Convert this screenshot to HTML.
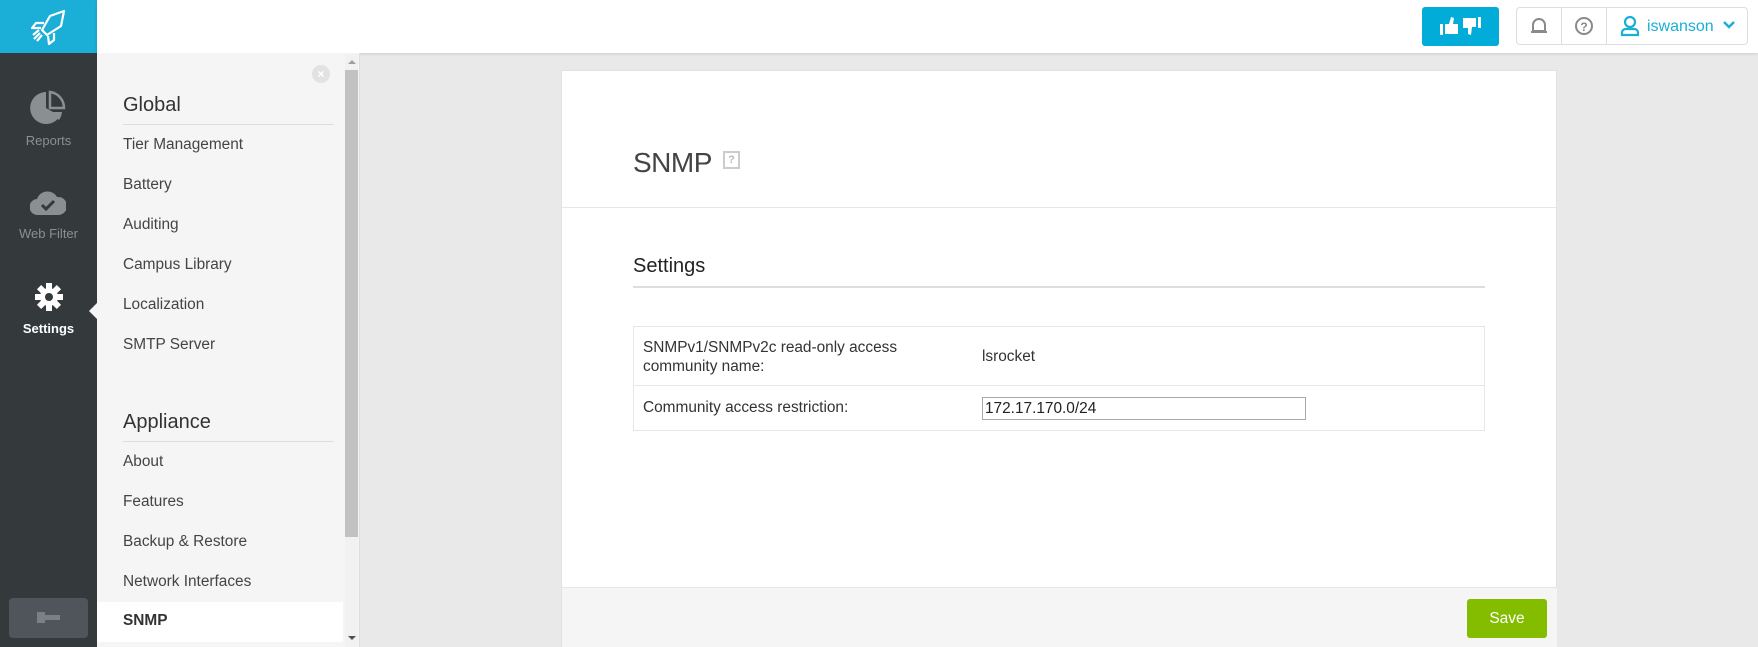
<!DOCTYPE html>
<html><head><meta charset="utf-8"><style>
*{box-sizing:border-box;margin:0;padding:0}
body{width:1758px;height:647px;overflow:hidden;background:#e9e9e9;font-family:"Liberation Sans",Arial,sans-serif;position:relative}
.abs{position:absolute}
#side{left:0;top:0;width:97px;height:647px;background:#343a3b}
#logo{left:0;top:0;width:97px;height:53px;background:#1baed6}
#top{left:97px;top:0;width:1661px;height:53px;background:#fff;box-shadow:0 1px 3px rgba(0,0,0,.12)}
.nav{color:#8a8f91;font-size:13px;width:97px;text-align:center}
#panel{left:97px;top:53px;width:263px;height:594px;background:#f5f5f5;border-right:1px solid #ddd}
.h{left:123px;font-size:20px;color:#333}
.hr{left:123px;width:211px;height:1px;background:#ddd}
.it{left:123px;font-size:15.4px;color:#444}
#card{left:561px;top:70px;width:996px;height:577px;background:#fff;border:1px solid #e2e2e2}
</style></head><body>
<div id="side" class="abs"></div>
<div id="logo" class="abs">
<svg class="abs" style="left:30px;top:8px" width="38" height="38" viewBox="0 0 38 38" fill="none" stroke="#fff" stroke-width="2.2" stroke-linejoin="round"><path d="M34 3 L20 8 L12 22 L17 27 L31 18 Z"/><path d="M14 15 L6 15 L2 20 L11 20"/><path d="M24 25 L24 32 L19 36 L18 28"/><path d="M10 25 L4 31 M12 27 L7 33 M9 22 L3 27"/></svg>
</div>
<svg class="abs" style="left:30px;top:90px" width="36" height="36" viewBox="0 0 36 36"><path d="M16 2 A16 16 0 1 0 30 26 L16 18 Z" fill="#8a8f91"/><path d="M20 2 A16 16 0 0 1 34 18 L20 18Z" fill="none" stroke="#8a8f91" stroke-width="2.5"/><path d="M20 22 L32 22 A16 16 0 0 1 29 30 Z" fill="#8a8f91"/></svg>
<div class="abs nav" style="top:133px">Reports</div>
<svg class="abs" style="left:30px;top:189px" width="36" height="26" viewBox="0 0 36 26"><path d="M8 26 A8 8 0 0 1 7 10 A11 11 0 0 1 27 8 A9 9 0 0 1 29 26 Z" fill="#8a8f91"/><path d="M12 16 L16 20 L24 12" stroke="#343a3b" stroke-width="3" fill="none"/></svg>
<div class="abs nav" style="top:226px">Web Filter</div>
<svg class="abs" style="left:35px;top:283px" width="28" height="28" viewBox="0 0 28 28"><g fill="#fff"><circle cx="14" cy="14" r="9"/><rect x="11" y="0" width="6" height="28"/><rect x="0" y="11" width="28" height="6"/><rect x="11" y="0" width="6" height="28" transform="rotate(45 14 14)"/><rect x="11" y="0" width="6" height="28" transform="rotate(-45 14 14)"/></g><circle cx="14" cy="14" r="4" fill="#343a3b"/></svg>
<div class="abs nav" style="top:321px;color:#fff;font-weight:bold">Settings</div>
<div class="abs" style="left:89px;top:303px;border:8px solid transparent;border-right-color:#f5f5f5;border-left:0"></div>
<div class="abs" style="left:9px;top:598px;width:79px;height:40px;background:#4f555b;border-radius:4px"></div>
<svg class="abs" style="left:37px;top:611px" width="24" height="14" viewBox="0 0 24 14"><rect x="0" y="1" width="8" height="11" fill="#7b8085"/><rect x="8" y="4" width="15" height="5" fill="#7b8085"/></svg>
<div id="top" class="abs"></div>
<div class="abs" style="left:1422px;top:7px;width:77px;height:39px;background:#02acd9;border-radius:3px"></div>
<svg class="abs" style="left:1440px;top:16px" width="42" height="20" viewBox="0 0 42 20"><g fill="#fff"><rect x="0" y="8" width="3" height="11"/><path d="M5 8 L9 8 L11 1 L14 2 L13 8 L18 8 L18 18 L5 18Z"/><path d="M23 2 L36 2 L36 11 L32 11 L31 19 L28 18 L28 12 L23 12Z"/><rect x="38" y="1" width="3" height="11"/></g></svg>
<div class="abs" style="left:1516px;top:7px;width:232px;height:38px;border:1px solid #ddd;border-radius:4px"></div>
<div class="abs" style="left:1561px;top:8px;width:1px;height:37px;background:#ddd"></div>
<div class="abs" style="left:1606px;top:8px;width:1px;height:37px;background:#ddd"></div>
<svg class="abs" style="left:1529px;top:16px" width="20" height="20" viewBox="0 0 20 20" fill="none" stroke="#8a8a8a" stroke-width="2"><path d="M4 15 L4 9 A6 6 0 0 1 16 9 L16 15 Z M2 16 L18 16 M10 2 L10 3"/></svg>
<svg class="abs" style="left:1574px;top:16px" width="20" height="20" viewBox="0 0 20 20"><circle cx="10" cy="10" r="8" fill="none" stroke="#8a8a8a" stroke-width="2"/><text x="10" y="15" font-size="12" font-weight="bold" text-anchor="middle" fill="#8a8a8a" font-family="Liberation Sans">?</text></svg>
<svg class="abs" style="left:1620px;top:15px" width="20" height="22" viewBox="0 0 20 22" fill="none" stroke="#1baed6" stroke-width="2.2"><circle cx="10" cy="7" r="5"/><path d="M2 20 L2 17 A4 4 0 0 1 6 14 L14 14 A4 4 0 0 1 18 17 L18 20 Z"/></svg>
<div class="abs" style="left:1647px;top:18px;font-size:16px;color:#1baed6">iswanson</div>
<svg class="abs" style="left:1723px;top:21px" width="12" height="8" viewBox="0 0 12 8"><path d="M1 1 L6 6 L11 1" stroke="#1baed6" stroke-width="2.5" fill="none"/></svg>
<div id="panel" class="abs"></div>
<div class="abs" style="left:312px;top:65px;width:18px;height:18px;border-radius:50%;background:#e2e2e2;color:#fff;font-size:12px;text-align:center;line-height:18px;font-weight:bold">×</div>
<div class="abs" style="left:345px;top:54px;width:13px;height:593px;background:#f1f1f1"></div>
<div class="abs" style="left:345px;top:70px;width:13px;height:467px;background:#c1c1c1"></div>
<div class="abs" style="left:348px;top:60px;border:4px solid transparent;border-bottom-color:#a0a0a0;border-top:0"></div>
<div class="abs" style="left:348px;top:636px;border:4px solid transparent;border-top-color:#505050;border-bottom:0"></div>
<div class="abs h" style="top:94px">Global</div>
<div class="abs hr" style="top:124px"></div>
<div class="abs it" style="top:136px">Tier Management</div>
<div class="abs it" style="top:176px">Battery</div>
<div class="abs it" style="top:216px">Auditing</div>
<div class="abs it" style="top:256px">Campus Library</div>
<div class="abs it" style="top:296px">Localization</div>
<div class="abs it" style="top:336px">SMTP Server</div>
<div class="abs h" style="top:411px">Appliance</div>
<div class="abs hr" style="top:441px"></div>
<div class="abs it" style="top:453px">About</div>
<div class="abs it" style="top:493px">Features</div>
<div class="abs it" style="top:533px">Backup &amp; Restore</div>
<div class="abs it" style="top:573px">Network Interfaces</div>
<div class="abs" style="left:97px;top:602px;width:246px;height:40px;background:#fff"></div>
<div class="abs it" style="top:612px;font-weight:bold;color:#333">SNMP</div>
<div id="card" class="abs"></div>
<div class="abs" style="left:633px;top:147px;font-size:28px;color:#444;letter-spacing:-0.5px">SNMP</div>
<div class="abs" style="left:723px;top:151px;width:17px;height:18px;border:2px solid #ccc;font-size:11px;color:#bbb;text-align:center;line-height:14px;font-weight:bold">?</div>
<div class="abs" style="left:562px;top:207px;width:994px;height:1px;background:#e6e6e6"></div>
<div class="abs" style="left:633px;top:255px;font-size:20px;color:#222">Settings</div>
<div class="abs" style="left:633px;top:286px;width:852px;height:2px;background:#ddd"></div>
<div class="abs" style="left:633px;top:326px;width:852px;height:105px;border:1px solid #e6e6e6"></div>
<div class="abs" style="left:634px;top:385px;width:850px;height:1px;background:#e6e6e6"></div>
<div class="abs" style="left:643px;top:338px;font-size:15.4px;color:#333;line-height:19px">SNMPv1/SNMPv2c read-only access<br>community name:</div>
<div class="abs" style="left:982px;top:348px;font-size:15.4px;color:#333">lsrocket</div>
<div class="abs" style="left:643px;top:399px;font-size:15.4px;color:#333">Community access restriction:</div>
<div class="abs" style="left:982px;top:397px;width:324px;height:23px;border:1px solid #a9a9a9;font-size:15.4px;color:#222;padding:2px 2px">172.17.170.0/24</div>
<div class="abs" style="left:562px;top:587px;width:995px;height:60px;background:#f5f5f5;border-top:1px solid #e6e6e6"></div>
<div class="abs" style="left:1467px;top:599px;width:80px;height:39px;background:#84bc00;border-radius:3px;color:#fff;font-size:15.5px;text-align:center;line-height:39px">Save</div>
</body></html>
